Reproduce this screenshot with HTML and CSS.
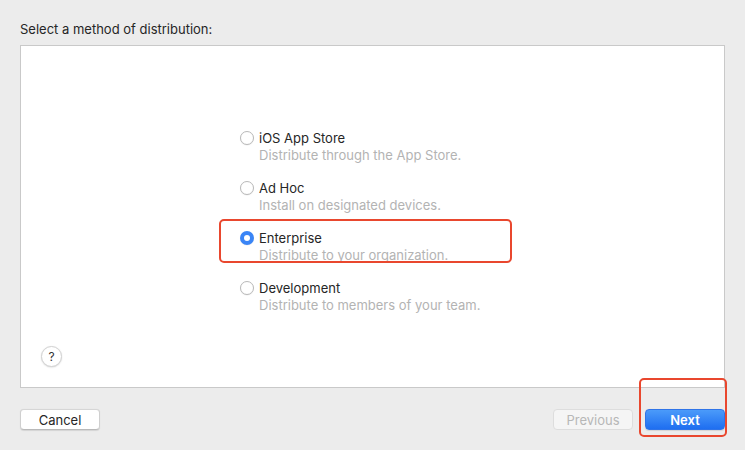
FILE: index.html
```html
<!DOCTYPE html>
<html lang="en">
<head>
  <meta charset="UTF-8">
  <title>Distribution Method</title>
  <link rel="stylesheet" href="styles.css">
</head>
<body>
  <div class="title">Select a method of distribution:</div>

  <div class="panel">
    <div class="options">
      <label class="option">
        <span class="radio"></span>
        <span class="text">
          <span class="name">iOS App Store</span>
          <span class="desc">Distribute through the App Store.</span>
        </span>
      </label>
      <label class="option">
        <span class="radio"></span>
        <span class="text">
          <span class="name">Ad Hoc</span>
          <span class="desc">Install on designated devices.</span>
        </span>
      </label>
      <label class="option">
        <span class="radio checked"></span>
        <span class="text">
          <span class="name">Enterprise</span>
          <span class="desc">Distribute to your organization.</span>
        </span>
      </label>
      <label class="option">
        <span class="radio"></span>
        <span class="text">
          <span class="name">Development</span>
          <span class="desc">Distribute to members of your team.</span>
        </span>
      </label>
    </div>
    <button class="help">?</button>
  </div>

  <div class="footer">
    <button class="btn">Cancel</button>
    <span class="spacer"></span>
    <button class="btn" disabled>Previous</button>
    <button class="btn primary">Next</button>
  </div>

  <!-- annotation boxes drawn over the dialog -->
  <div class="mark mark-enterprise"></div>
  <div class="mark mark-next"></div>
</body>
</html>
```

FILE: styles.css
```css
*, *::before, *::after {
  box-sizing: border-box;
}
body {
  margin: 0;
  width: 745px;
  height: 450px;
  background: #ececec;
  font-family: Inter, "Liberation Sans", Helvetica, Arial, sans-serif;
  font-size: 13px;
  color: #262626;
  position: relative;
  overflow: hidden;
}
.title {
  padding: 21px 20px 0;
  line-height: 16px;
}
.panel {
  margin: 8px 20px 0;
  height: 343px;
  background: #fff;
  border: 1px solid #c9c9c9;
  display: flex;
  flex-direction: column;
  padding: 84px 0 20px 20px;
}
.options {
  margin-left: 199px;
  display: flex;
  flex-direction: column;
  gap: 16px;
}
.option {
  display: flex;
  gap: 5px;
}
.radio {
  width: 14px;
  height: 14px;
  margin-top: 1px;
  border-radius: 50%;
  background: #fff;
  border: 1px solid #b9b9b9;
  box-shadow: 0 0.5px 1px rgba(0, 0, 0, 0.08);
  flex: none;
}
.radio.checked {
  border: none;
  background: #3a85f6;
  display: flex;
  align-items: center;
  justify-content: center;
}
.radio.checked::after {
  content: "";
  width: 6px;
  height: 6px;
  border-radius: 50%;
  background: #fff;
}
.text {
  display: flex;
  flex-direction: column;
  line-height: 17px;
}
.desc {
  color: #b3b3b3;
}
.help {
  margin-top: auto;
  width: 21px;
  height: 21px;
  border-radius: 50%;
  border: 1px solid #d2d2d2;
  background: #fff;
  box-shadow: 0 0.5px 1.5px rgba(0, 0, 0, 0.15);
  font-family: inherit;
  font-size: 12px;
  color: #333;
  padding: 0;
  line-height: 19px;
}
.footer {
  display: flex;
  gap: 12px;
  padding: 21px 20px 0;
}
.spacer {
  flex: 1;
}
.btn {
  width: 80px;
  height: 21px;
  padding: 0;
  border-radius: 4px;
  border: 1px solid #cfcfcf;
  border-top-color: #d6d6d6;
  border-bottom-color: #b9b9b9;
  background: #fff;
  box-shadow: 0 0.5px 1px rgba(0, 0, 0, 0.1);
  font-family: inherit;
  font-size: 13px;
  color: #262626;
}
.btn:disabled {
  background: #f5f5f5;
  border-color: #dddddd;
  color: #b7b7b7;
  box-shadow: none;
}
.btn.primary {
  border: 1px solid #2f74e8;
  background: linear-gradient(#4b9bfa, #1e6ef0);
  color: #fff;
  font-weight: 600;
}
.mark {
  position: absolute;
  border: 2px solid #e9472e;
  border-radius: 5px;
}
.mark-enterprise {
  left: 219px;
  top: 219px;
  width: 293px;
  height: 44px;
}
.mark-next {
  left: 639px;
  top: 378px;
  width: 88px;
  height: 59px;
}
```
